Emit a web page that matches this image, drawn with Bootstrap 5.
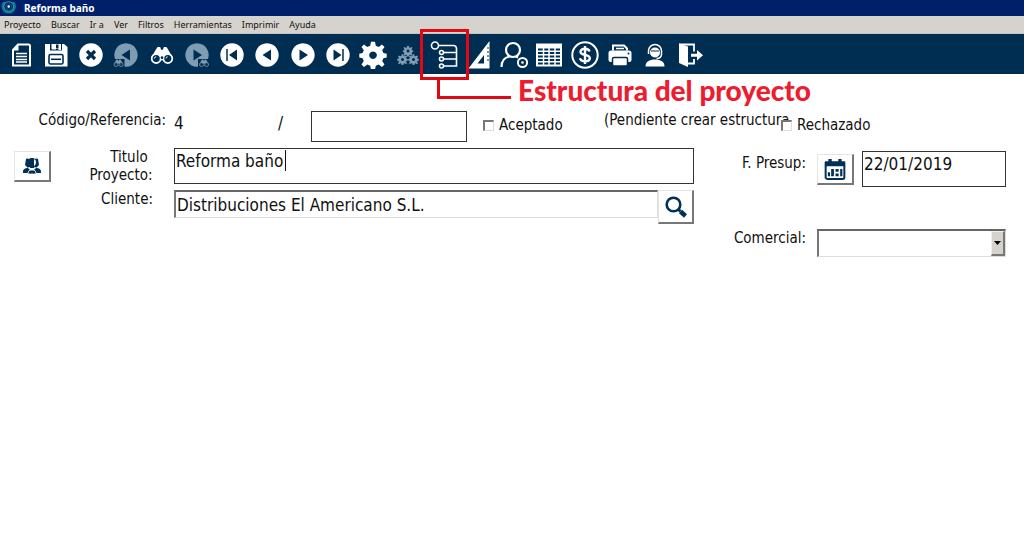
<!DOCTYPE html>
<html lang="es">
<head>
<meta charset="utf-8">
<meta name="viewport" content="width=device-width, initial-scale=1">
<title>Reforma baño</title>
<link href="https://cdn.jsdelivr.net/npm/bootstrap@5.3.0/dist/css/bootstrap.min.css" rel="stylesheet">
<style>
  body { font-family: "DejaVu Sans Condensed", Tahoma, sans-serif; font-size: 15px; line-height: 18px; color: #111; background: #fff; }
  header { font-family: "Noto Sans", Tahoma, sans-serif; }
  .titlebar { height: 16px; background: #001f6b; color: #fff; font-size: 10px; line-height: 16px; }
  .menubar { height: 18px; background: #d6d3ce; font-size: 9px; line-height: 18px; gap: 10px; padding: 0 4px; border-bottom: 1px solid #c4c4c0; }
  .menubar a { color: #111; text-decoration: none; }
  .toolbar { height: 40px; background: #002d52; padding: 0 3px; gap: 1px; }
  .tool { width: 35px; height: 40px; padding: 2px 0 0; border: 0; background: none; color: #fff; display: flex; align-items: center; justify-content: center; position: relative; }
  .tool:disabled { color: #7f9db2; }
  .tool svg { width: 28px; height: 28px; display: block; }
  .callout-box { position: absolute; left: -6px; top: -5px; width: 49px; height: 51px; border: 3px solid #e30613; pointer-events: none; z-index: 2; }
  .callout-line { position: absolute; left: 11px; top: 46px; width: 74px; height: 19px; border: solid #e30613; border-width: 0 0 3px 3px; }
  .callout-text { position: absolute; left: 92px; top: 36px; white-space: nowrap; font: 900 28px/40px Lato, sans-serif; color: #ed1c2e; }
  .form-area { padding: 37px 18px 0 14px; }
  .line-title { margin-top: 6px; }
  .line-client { margin-top: 3px; }
  .line-agent { margin-top: 5px; }
  .lead-col { width: 160px; flex: none; }
  .lead-label { padding-right: 21px; text-align: right; }
  .title-label { width: 78px; margin-right: 14px; text-align: center; }
  .side-col { width: 312px; flex: none; }
  .side-drop { margin-top: 3px; }
  .big-text { font-size: 17px; line-height: 24px; flex: none; }
  .code-value { width: 104px; }
  .code-slash { width: 33px; }
  .side-label { width: 112px; margin-right: 11px; text-align: right; flex: none; }
  .fill { flex: 1 1 0; min-width: 0; }
  .field { border: 1px solid #333; background: #fff; border-radius: 0; color: #111; font-size: 17px; line-height: 24px; padding: 0 1px 10px; height: 36px; min-width: 0; width: 100%; display: block; outline: 0; }
  .field-code { height: 31px; padding-bottom: 5px; }
  .field-sunken { height: 28px; padding: 0 1px; border: solid; border-width: 2px 1px 1px 2px; border-color: #666 #ddd #ddd #777; appearance: none; }
  .push { width: 37px; height: 31px; padding: 0; background: #fff; border: solid; border-width: 1px 2px 2px 1px; border-color: #e4e4e0 #777 #777 #e4e4e0; color: #003057; display: flex; align-items: center; justify-content: center; flex: none; }
  .push-tall { height: 34px; width: 36px; }
  .check { appearance: none; width: 11px; height: 11px; margin: 0; background: #fff; border: solid; border-width: 2px 1px 1px 2px; border-color: #777 #ddd #ddd #777; position: relative; flex: none; }
  .check:checked { background: #003057; }
  .check-label { display: flex; align-items: center; gap: 5px; margin-top: 5px; white-space: nowrap; flex: none; }
  .check-accept { width: 121px; }
  .check-reject { width: 225px; }
  .caret { position: absolute; left: 111px; top: 2px; width: 1px; height: 21px; background: #111; }
  .pending { width: 177px; white-space: nowrap; flex: none; }
  .drop-arrow { position: absolute; top: 2px; right: 1px; bottom: 1px; width: 14px; background: #d6d3ce; border: solid; border-width: 1px 2px 2px 1px; border-color: #eee #777 #777 #eee; display: flex; align-items: center; justify-content: center; pointer-events: none; }
</style>
</head>
<body>
<svg class="d-none" xmlns="http://www.w3.org/2000/svg">
  <symbol id="ring-prev" viewBox="0 0 28 28"><path fill-rule="evenodd" fill="currentColor" d="M14 2.300a11.700 11.700 0 1 0 .01 0zM18 8.500v11L9.500 14z"/></symbol>
  <symbol id="ring-next" viewBox="0 0 28 28"><path fill-rule="evenodd" fill="currentColor" d="M14 2.300a11.700 11.700 0 1 0 .01 0zM10.500 8.500v11L19 14z"/></symbol>
  <symbol id="binoc" viewBox="0 0 28 28"><path fill="currentColor" d="M7 8l2-3h3l1 3h2l1-3h3l2 3 4.500 8v4h-23v-4z"/><g fill="#002d52" stroke="currentColor" stroke-width="2"><circle cx="7.500" cy="18" r="5"/><circle cx="20.500" cy="18" r="5"/></g><circle cx="14" cy="17" r="1.500" fill="#002d52"/><path d="M5.500 18a2 2 0 0 1 2-2M18.500 18a2 2 0 0 1 2-2" stroke="currentColor" fill="none"/></symbol>
  <symbol id="gear" viewBox="0 0 28 28"><path fill="currentColor" fill-rule="evenodd" d="M12 .8h4l.8 4 3 1.200 3.200-2.500 2.500 2.500-2.300 3.300 1.200 2.800 3.300.7v3.600l-3.300.8-1.200 2.900 2.300 3.300-2.500 2.500-3.300-2.300-2.900 1.200-.8 4h-4l-.8-4-2.900-1.200-3.300 2.300-2.500-2.500 2.300-3.300-1.200-2.900L.300 16.400v-3.600l3.300-.7 1.200-2.800L2.500 6 5 3.500 8.200 6l3-1.200zM14 10.400a3.800 3.800 0 1 0 .01 0z"/></symbol>
</svg>

<header>
  <div class="titlebar d-flex align-items-center fw-bold">
    <svg width="16" height="16" viewBox="0 0 16 16" class="me-1" aria-hidden="true"><path d="M3 2a7.200 7.200 0 1 0 11.500 0" fill="#087f8c"/><circle cx="8.700" cy="6.500" r="4.800" fill="#001f6b" stroke="#36a5ac"/><circle cx="8.700" cy="6.500" r="2.800" fill="none" stroke="#0b5f8c"/><circle cx="8.700" cy="6.500" r="1.200" fill="#fff"/></svg>
    <span class="ps-1">Reforma baño</span>
  </div>
  <nav class="menubar d-flex" aria-label="Menú">
    <a href="#">Proyecto</a><a href="#">Buscar</a><a href="#">Ir a</a><a href="#">Ver</a><a href="#">Filtros</a><a href="#">Herramientas</a><a href="#">Imprimir</a><a href="#">Ayuda</a>
  </nav>
  <div class="toolbar d-flex" role="toolbar" aria-label="Herramientas">
    <div class="d-flex">
      <button class="tool" type="button" aria-label="Nuevo"><svg viewBox="0 0 28 28"><path d="M11 3.500h10.500a1.500 1.500 0 0 1 1.500 1.500v19.500H6V9z" fill="none" stroke="#fff" stroke-width="2"/><path d="M11.500 3v6.500H5z" fill="#fff"/><path d="M9 12.500h11M9 15.500h11M9 18.500h11M9 21h11" stroke="#fff" stroke-width="1.500"/></svg></button>
      <button class="tool" type="button" aria-label="Guardar"><svg viewBox="0 0 28 28"><path fill="#fff" d="M3 3h5v6.500h12V3h2l3.500 3v19.500H3z"/><path fill="#fff" d="M10 3h4v5.500h-4zM16.500 3H19v6h-2.500z"/><path fill="#fff" d="M9.500 3h8v5h-8z"/><path d="M14 3.500h2.500v4H14z" fill="#002d52"/><rect x="7" y="13.500" width="14" height="9.500" rx="1.500" fill="#fff" stroke="#002d52" stroke-width="1.600"/><path d="M9 18.300h10" stroke="#002d52" stroke-width="1.600"/></svg></button>
      <button class="tool" type="button" aria-label="Cancelar"><svg viewBox="0 0 28 28"><circle cx="14" cy="14" r="11.700" fill="#fff"/><path d="M10 10l8 8M18 10l-8 8" stroke="#002d52" stroke-width="3.200"/></svg></button>
      <button class="tool" type="button" disabled aria-label="Buscar anterior"><svg viewBox="0 0 28 28"><use href="#ring-prev"/><path d="M1 18h11.500v9H1z" fill="#002d52"/><use href="#binoc" x="1" y="16.500" width="11" height="11"/></svg></button>
    </div>
    <div class="d-flex">
      <button class="tool" type="button" aria-label="Buscar"><svg viewBox="0 0 28 28"><use href="#binoc" x="1.500" y="1.500" width="25" height="25"/></svg></button>
      <button class="tool" type="button" disabled aria-label="Buscar siguiente"><svg viewBox="0 0 28 28"><use href="#ring-next"/><path d="M15 18h12v9H15z" fill="#002d52"/><use href="#binoc" x="15.500" y="16.500" width="11" height="11"/></svg></button>
      <button class="tool" type="button" aria-label="Primero"><svg viewBox="0 0 28 28"><circle cx="14" cy="14" r="11.700" fill="#fff"/><path d="M19 8.500v11L11 14z" fill="#002d52"/><path d="M9 8v12" stroke="#002d52" stroke-width="1.500"/></svg></button>
      <button class="tool" type="button" aria-label="Anterior"><svg><use href="#ring-prev"/></svg></button>
    </div>
    <div class="d-flex">
      <button class="tool" type="button" aria-label="Siguiente"><svg><use href="#ring-next"/></svg></button>
      <button class="tool" type="button" aria-label="Último"><svg viewBox="0 0 28 28"><circle cx="14" cy="14" r="11.700" fill="#fff"/><path d="M9.500 8.500v11L17.500 14z" fill="#002d52"/><path d="M19 8v12" stroke="#002d52" stroke-width="1.500"/></svg></button>
      <button class="tool" type="button" aria-label="Configuración"><svg><use href="#gear"/></svg></button>
      <button class="tool" type="button" disabled aria-label="Procesos"><svg viewBox="0 0 28 28"><use href="#gear" x="8.500" y="4.500" width="11" height="11"/><use href="#gear" x="3" y="13" width="11" height="11"/><use href="#gear" x="14" y="13" width="11" height="11"/></svg></button>
    </div>
    <div class="d-flex">
      <button class="tool" type="button" aria-label="Estructura del proyecto">
        <svg viewBox="0 0 28 28" fill="none" stroke="#fff" stroke-width="1.600"><circle cx="5" cy="4.500" r="3.500"/><path d="M8.500 4.500h15a3 3 0 0 1 3 3V25H13.500M13.500 11.500h13M13.500 18h13"/><circle cx="11.500" cy="11.500" r="2"/><circle cx="11.500" cy="18" r="2"/><circle cx="11.500" cy="25" r="2"/></svg>
        <span class="callout-box"></span><span class="callout-line"></span><span class="callout-text">Estructura del proyecto</span>
      </button>
      <button class="tool" type="button" aria-label="Mediciones"><svg viewBox="0 0 28 28"><path fill="#fff" fill-rule="evenodd" d="M24.500 0v27.500H3.500zM19 14v8.500h-6.500z"/><path d="M22 7h2M22 11h2M22 15h2M22 19h2" stroke="#002d52"/></svg></button>
      <button class="tool" type="button" aria-label="Usuario"><svg viewBox="0 0 28 28" fill="none" stroke="#fff" stroke-width="2.200"><circle cx="13" cy="9" r="7"/><path d="M1.500 26c0-6 3-9.500 8-10.500M16 15.500l2 1"/><circle cx="22.500" cy="21.500" r="4.600" stroke-width="2"/><circle cx="22.500" cy="21.500" r="1.300" fill="#fff" stroke="none"/></svg></button>
      <button class="tool" type="button" aria-label="Tabla"><svg viewBox="0 0 28 28"><path fill="#fff" d="M1 2.500h26v23H1z"/><path d="M3 8.500h22M3 12h22M3 15.500h22M3 19h22M3 22.500h22" stroke="#002d52" stroke-width="1.800"/><path d="M8.500 7v17M14 7v17M20 7v17" stroke="#fff" stroke-width="1.500"/></svg></button>
    </div>
    <div class="d-flex">
      <button class="tool" type="button" aria-label="Importes"><svg viewBox="0 0 28 28" fill="none" stroke="#fff"><circle cx="14" cy="14" r="12.700" stroke-width="2"/><path d="M18.500 10.500c-.5-2-2-2.800-4.500-2.800s-4.500 1-4.500 3c0 4.300 9.300 2.200 9.300 6.600 0 2-2 3-4.800 3s-4.500-1-5-3M14 5v18" stroke-width="2.400"/></svg></button>
      <button class="tool" type="button" aria-label="Imprimir"><svg viewBox="0 0 28 28"><path d="M7 9.500V4.500h11l3 3v2" fill="none" stroke="#fff" stroke-width="2"/><path d="M10 7.500h8" stroke="#fff" stroke-width="1.500"/><rect x="2.500" y="9.500" width="23" height="11.500" rx="2.500" fill="#fff"/><rect x="6.500" y="16.500" width="15" height="8.500" rx="1.500" fill="#fff" stroke="#002d52" stroke-width="1.500"/><circle cx="22.500" cy="12.500" r="1" fill="#002d52"/></svg></button>
      <button class="tool" type="button" aria-label="Soporte"><svg viewBox="0 0 28 28"><path d="M4.500 25.500c0-5 4-7 9.500-7s9.500 2 9.500 7z" fill="#fff"/><circle cx="14" cy="11.500" r="5" fill="#fff"/><path d="M7.500 13v-3a6.500 6.500 0 0 1 13 0v3M20.500 13c0 3-2 4.500-5 4.500" fill="none" stroke="#fff" stroke-width="1.500"/><path d="M10 10h8" stroke="#002d52" stroke-width="1" fill="none"/></svg></button>
      <button class="tool" type="button" aria-label="Salir"><svg viewBox="0 0 28 28"><path d="M3 2.500l9 3V26l-9-4z" fill="#fff"/><path d="M3 3.500h15v7M18 18v4.500h-6" fill="none" stroke="#fff" stroke-width="1.800"/><path d="M15 12.700h6V9l6 5.300-6 5.200v-3.700h-6z" fill="#fff"/></svg></button>
    </div>
  </div>
</header>

<main class="form-area">
  <form>
    <div class="d-flex align-items-start">
      <label class="lead-col pe-2 text-end text-nowrap" for="codigo">Código/Referencia:</label>
      <output class="big-text code-value" id="codigo">4</output>
      <span class="big-text code-slash">/</span>
      <div class="fill"><input class="field field-code" type="text" aria-label="Referencia"></div>
      <div class="d-flex align-items-start ms-3">
        <label class="check-label check-accept"><input class="check" type="checkbox">Aceptado</label>
        <span class="pending">(Pendiente crear estructura</span>
        <label class="check-label check-reject"><input class="check" type="checkbox">Rechazado</label>
      </div>
    </div>
    <div class="line-title d-flex align-items-start">
      <div class="lead-col d-flex justify-content-between align-items-start">
        <button class="push side-drop" type="button" aria-label="Clientes"><svg width="20" height="20" viewBox="0 0 20 20" fill="currentColor"><path d="M4 3c2-1 4 0 4 2v4l-2 3-3-3zM16 3c-2-1-4 0-4 2v4l2 3 3-3zM10 2c3 0 4 2 4 5l-2 5H8L6 7c0-3 1-5 4-5z"/><path d="M1 16c0-3 2-4 5-4l2 2-2 3H1zM19 16c0-3-2-4-5-4l-2 2 2 3h5z"/><path d="M6 18c0-3 1-4 4-4s4 1 4 4z" stroke="#fff" stroke-width=".8"/></svg></button>
        <label class="title-label" for="titulo"><span class="ps-3">Titulo</span><br>Proyecto:</label>
      </div>
      <div class="fill position-relative"><input class="field" id="titulo" type="text" value="Reforma baño"><span class="caret"></span></div>
      <div class="side-col side-drop d-flex align-items-start">
        <label class="side-label side-drop" for="fecha">F. Presup:</label>
        <button class="push side-drop" type="button" aria-label="Elegir fecha"><svg width="22" height="22" viewBox="0 0 20 20"><path d="M1.500 4.500h17v13a1.500 1.500 0 0 1-1.500 1.500H3a1.500 1.500 0 0 1-1.500-1.500z" fill="none" stroke="currentColor" stroke-width="1.800"/><path d="M1 3h18v4.500H1zM4 1h3v3H4zM13 1h3v3h-3z" fill="currentColor"/><path d="M3.500 13h2v3.500h-2zM6.500 10H9v6.500H6.500zM10.500 10h2.800v2.500h-2.800zM10.500 14h2.800v2.500h-2.800zM14.700 10h2v6.500h-2z" fill="currentColor"/></svg></button>
        <div class="fill ms-2"><input class="field" id="fecha" type="text" value="22/01/2019"></div>
      </div>
    </div>
    <div class="line-client d-flex align-items-start">
      <label class="lead-col lead-label" for="cliente">Cliente:</label>
      <div class="fill"><input class="field field-sunken" id="cliente" type="text" value="Distribuciones El Americano S.L."></div>
      <button class="push push-tall" type="button" aria-label="Buscar cliente"><svg width="24" height="24" viewBox="0 0 24 24" fill="none" stroke="currentColor"><circle cx="9.500" cy="9.500" r="6.800" stroke-width="2.600"/><path d="M14.500 14.500l2 2" stroke-width="3"/><path d="M16.500 16.500l5 4.500" stroke-width="4.500"/></svg></button>
      <div class="side-col"></div>
    </div>
    <div class="line-agent d-flex align-items-start justify-content-end">
      <div class="side-col d-flex align-items-start">
        <label class="side-label" for="comercial">Comercial:</label>
        <div class="fill position-relative">
          <select class="field field-sunken" id="comercial"><option></option></select>
          <span class="drop-arrow"><svg width="7" height="4" viewBox="0 0 7 4"><path d="M0 0h7L3.500 4z"/></svg></span>
        </div>
      </div>
    </div>
  </form>
</main>
<script src="https://cdn.jsdelivr.net/npm/bootstrap@5.3.0/dist/js/bootstrap.bundle.min.js"></script>
</body>
</html>
